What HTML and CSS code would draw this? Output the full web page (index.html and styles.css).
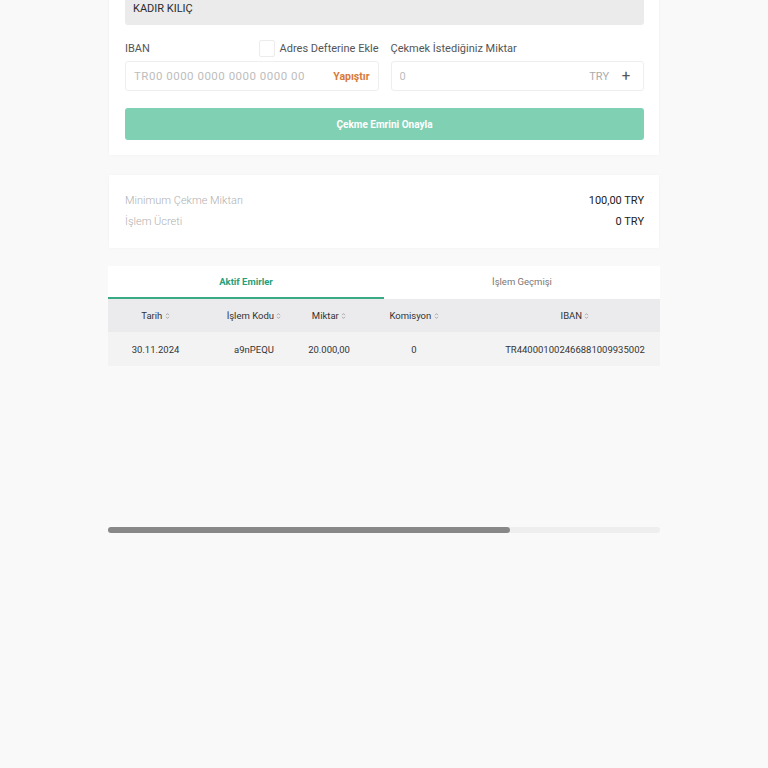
FILE: index.html
```html
<!DOCTYPE html>
<html lang="tr">
<head>
    <meta charset="UTF-8" />
    <meta name="viewport" content="width=device-width, initial-scale=1" />
    <title>Çekme</title>
    <link rel="stylesheet" href="styles.css">
</head>
<body>
    <main class="page">
        <section class="card form-card">
            <div class="name-field">KADIR KILIÇ</div>

            <div class="form-row">
                <div class="field">
                    <div class="field-head">
                        <label for="iban">IBAN</label>
                        <label class="check" for="addBook">
                            <input type="checkbox" id="addBook" />
                            <span class="box"></span>
                            <span>Adres Defterine Ekle</span>
                        </label>
                    </div>
                    <div class="input-box">
                        <input type="text" id="iban" placeholder="TR00 0000 0000 0000 0000 00" />
                        <button type="button" class="paste">Yapıştır</button>
                    </div>
                </div>
                <div class="field">
                    <div class="field-head">
                        <label for="amount">Çekmek İstediğiniz Miktar</label>
                    </div>
                    <div class="input-box">
                        <input type="text" id="amount" placeholder="0" />
                        <span class="unit">TRY</span>
                        <span class="plus">+</span>
                    </div>
                </div>
            </div>

            <button type="submit" class="submit" disabled>Çekme Emrini Onayla</button>
        </section>

        <section class="card info-card">
            <div class="info-row">
                <span>Minimum Çekme Miktarı</span>
                <strong>100,00 TRY</strong>
            </div>
            <div class="info-row">
                <span>İşlem Ücreti</span>
                <strong>0 TRY</strong>
            </div>
        </section>

        <section class="orders">
            <div class="tabs">
                <a href="#" class="tab active">Aktif Emirler</a>
                <a href="#" class="tab">İşlem Geçmişi</a>
            </div>
            <div class="table-wrap">
                <div class="table-clip">
                    <table>
                        <colgroup>
                            <col style="width: 95px">
                            <col style="width: 102px">
                            <col style="width: 48px">
                            <col style="width: 122px">
                            <col style="width: 200px">
                        </colgroup>
                        <thead>
                            <tr>
                                <th>Tarih <svg class="sort" viewBox="0 0 5 8"><path d="M1 3.2 2.5 1.6 4 3.2M1 4.8 2.5 6.4 4 4.8"/></svg></th>
                                <th>İşlem Kodu <svg class="sort" viewBox="0 0 5 8"><path d="M1 3.2 2.5 1.6 4 3.2M1 4.8 2.5 6.4 4 4.8"/></svg></th>
                                <th>Miktar <svg class="sort" viewBox="0 0 5 8"><path d="M1 3.2 2.5 1.6 4 3.2M1 4.8 2.5 6.4 4 4.8"/></svg></th>
                                <th>Komisyon <svg class="sort" viewBox="0 0 5 8"><path d="M1 3.2 2.5 1.6 4 3.2M1 4.8 2.5 6.4 4 4.8"/></svg></th>
                                <th>IBAN <svg class="sort" viewBox="0 0 5 8"><path d="M1 3.2 2.5 1.6 4 3.2M1 4.8 2.5 6.4 4 4.8"/></svg></th>
                            </tr>
                        </thead>
                        <tbody>
                            <tr>
                                <td>30.11.2024</td>
                                <td>a9nPEQU</td>
                                <td>20.000,00</td>
                                <td>0</td>
                                <td>TR440001002466881009935002</td>
                            </tr>
                        </tbody>
                    </table>
                </div>
                <div class="scrollbar"><div class="thumb"></div></div>
            </div>
        </section>
    </main>
</body>
</html>
```

FILE: styles.css
```css
* {
    margin: 0;
    padding: 0;
    box-sizing: border-box;
    font-family: Roboto, 'Liberation Sans', sans-serif;
}
body {
    background: #f9f9f9;
    color: #333;
    min-height: 100vh;
}
.page {
    width: 552px;
    margin: 0 auto;
    display: flex;
    flex-direction: column;
}
.card {
    background: #fff;
    margin: 0 1px;
    box-shadow: 0 0 3px rgba(0, 0, 0, 0.03);
}
.form-card {
    margin-top: -23px;
    padding: 16px 15px 15px 16px;
}
.name-field {
    height: 32px;
    line-height: 32px;
    background: #ebebeb;
    border-radius: 3px;
    padding: 0 8px;
    font-size: 11px;
    color: #2b2b2b;
}
.form-row {
    display: grid;
    grid-template-columns: 1fr 1fr;
    gap: 12px;
    margin-top: 15px;
}
.field-head {
    height: 17px;
    display: flex;
    align-items: center;
    justify-content: space-between;
    font-size: 11px;
    color: #555;
    margin-bottom: 4px;
}
.check {
    display: flex;
    align-items: center;
    gap: 5px;
    cursor: pointer;
}
.check input {
    display: none;
}
.check .box {
    width: 16px;
    height: 17px;
    border: 1px solid #ececec;
    border-radius: 2px;
    background: #fff;
}
.input-box {
    height: 30px;
    border: 1px solid #eeeeee;
    border-radius: 3px;
    display: flex;
    align-items: center;
    padding: 0 8px;
}
.input-box input {
    flex: 1;
    min-width: 0;
    border: none;
    outline: none;
    background: transparent;
    font-size: 11px;
    color: #333;
}
.input-box input::placeholder {
    color: #bdbdbd;
}
#iban {
    font-size: 11.5px;
    letter-spacing: 0.5px;
}
.paste {
    border: none;
    background: transparent;
    color: #d77a35;
    font-weight: 700;
    font-size: 10.5px;
    cursor: pointer;
}
.unit {
    font-size: 11px;
    color: #ababab;
    margin-right: 12px;
}
.plus {
    font-size: 15px;
    color: #555;
    width: 10px;
    margin-right: 4px;
    text-align: center;
}
.submit {
    width: 100%;
    height: 32px;
    margin-top: 17px;
    border: none;
    border-radius: 3px;
    background: #80d0b4;
    color: #fff;
    font-size: 10px;
    font-weight: 700;
}
.info-card {
    margin-top: 20px;
    padding: 15px 15px 16px 16px;
}
.info-row {
    display: flex;
    justify-content: space-between;
    line-height: 21px;
    font-size: 11px;
}
.info-row span {
    color: #b0b0b0;
    font-weight: 300;
}
.info-row strong {
    color: #222;
    font-weight: 400;
}
.orders {
    margin-top: 18px;
}
.tabs {
    display: grid;
    grid-template-columns: 1fr 1fr;
    background: #fff;
}
.tab {
    height: 33px;
    line-height: 31px;
    text-align: center;
    font-size: 9.5px;
    color: #777;
    text-decoration: none;
    border-bottom: 2px solid transparent;
}
.tab.active {
    color: #26a07a;
    font-weight: 700;
    border-bottom-color: #3aaa85;
}
.table-wrap {
    height: 235px;
    display: flex;
    flex-direction: column;
    justify-content: space-between;
    padding-bottom: 1px;
}
.table-clip {
    overflow: hidden;
}
table {
    width: 567px;
    border-collapse: collapse;
    table-layout: fixed;
}
th, td {
    text-align: center;
    font-size: 9.5px;
    color: #333;
    white-space: nowrap;
}
th {
    height: 33px;
    background: #ebebed;
    font-weight: 400;
}
td {
    height: 34px;
    background: #f3f3f4;
}
.sort {
    width: 5px;
    height: 8px;
    vertical-align: -1px;
    fill: none;
    stroke: #9a9a9a;
    stroke-width: 0.8;
}
.scrollbar {
    height: 6px;
    background: #eeeeee;
    border-radius: 3px;
}
.thumb {
    width: 402px;
    height: 100%;
    background: #888;
    border-radius: 3px;
}
```
